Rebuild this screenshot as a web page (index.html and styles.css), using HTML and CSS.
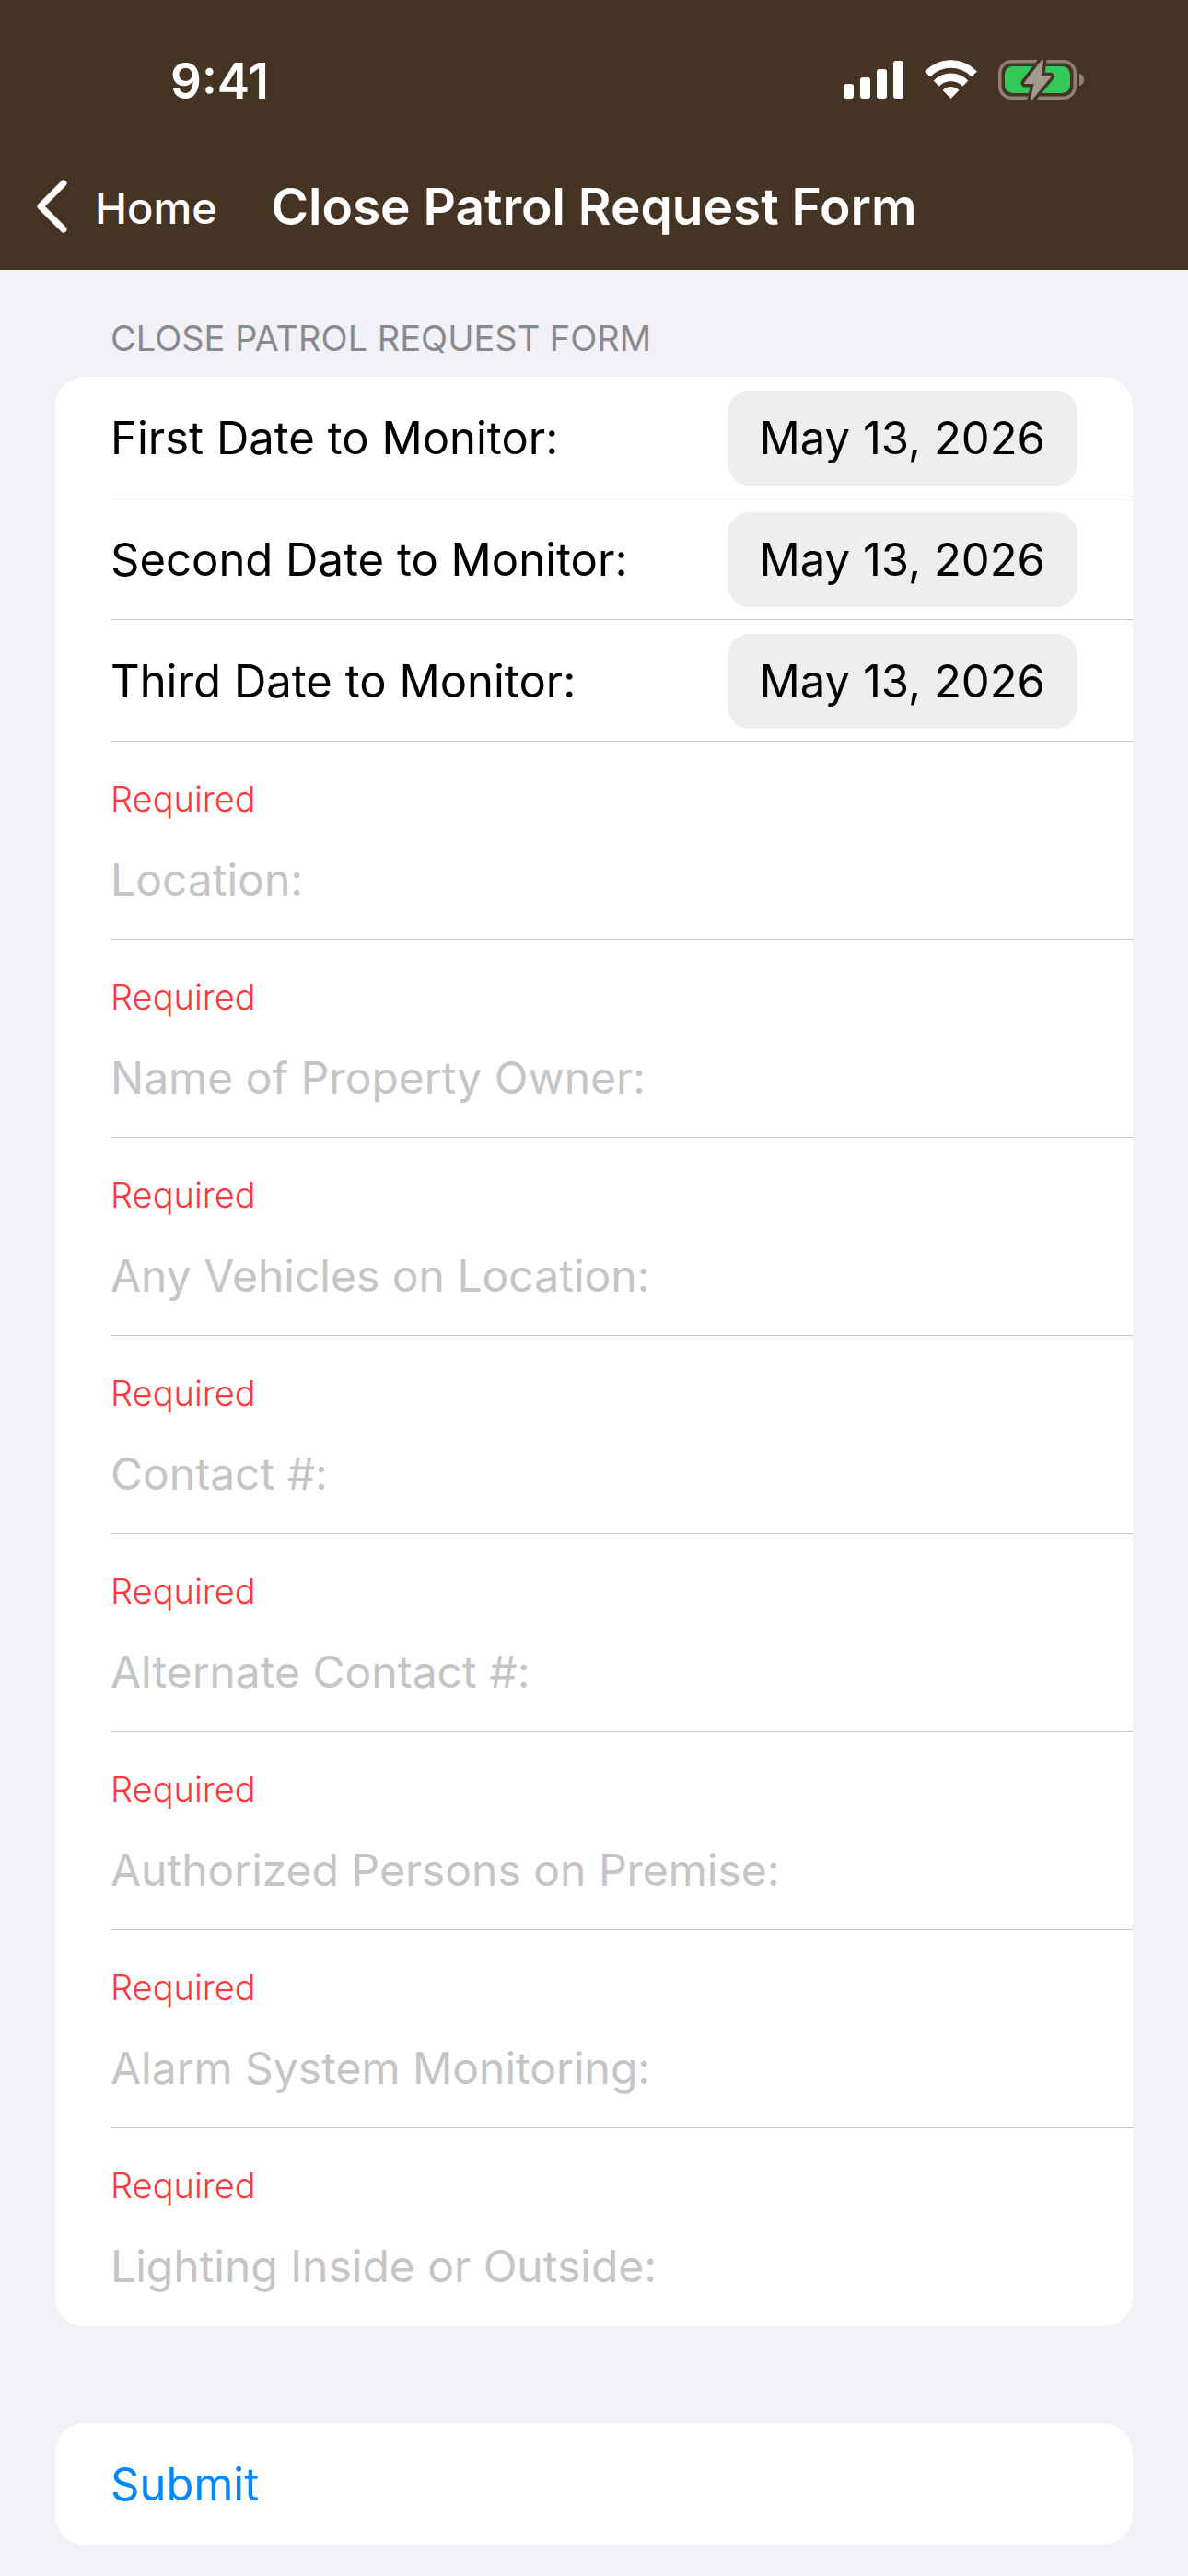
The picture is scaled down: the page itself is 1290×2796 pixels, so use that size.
FILE: index.html
```html
<!DOCTYPE html>
<html lang="en">

	<head>
		<meta charset="UTF-8">
		<meta name="viewport" content="width=device-width, initial-scale=1">
		<title>Close Patrol Request Form</title>
		<link rel="stylesheet" href="styles.css">
	</head>

	<body>
		<header class="header">
			<div class="status">
				<span class="time">9:41</span>
				<div class="status-icons">
					<!--signal-->
					<svg width="65" height="48" viewBox="0 0 65 48" fill="#fff" aria-hidden="true">
						<rect x="0" y="27" width="11" height="16" rx="3" />
						<rect x="18" y="20" width="11" height="23" rx="3" />
						<rect x="36" y="11" width="11" height="32" rx="3" />
						<rect x="54" y="2" width="11" height="41" rx="3" />
					</svg>
					<!--wifi-->
					<svg width="57" height="48" viewBox="0 0 57 48" fill="#fff" stroke="#fff" stroke-width="1" stroke-linejoin="round" aria-hidden="true">
						<path d="M.7 13.5A38.5 38.5 0 0 1 56.3 13.5L51 19A30.8 30.8 0 0 0 6 19Z" />
						<path d="M10.2 23.5A26 26 0 0 1 46.8 23.5L41.3 29.2A17.6 17.6 0 0 0 15.7 29.2Z" />
						<path d="M20.2 33.9A12 12 0 0 1 36.8 33.9L28.5 42.4Z" />
					</svg>
					<!--battery-->
					<svg width="93" height="48" viewBox="0 0 93 48" aria-hidden="true">
						<rect x="1.75" y="2.75" width="81.5" height="39.5" rx="12.5" fill="none" stroke="#8d8174" stroke-width="3.5" />
						<rect x="7" y="8" width="71" height="29" rx="8.5" fill="#34c759" />
						<path d="M88 15.5C91.4 16.8 93 19.3 93 22.4S91.4 28 88 29.3Z" fill="#8d8174" />
						<path d="M48 1.5L29 26H39.8L36 43.7L56.3 19.2H45.6Z" fill="#453323" stroke="#453323" stroke-width="9" stroke-linejoin="round" />
						<path d="M48 1.5L29 26H39.8L36 43.7L56.3 19.2H45.6Z" fill="#a2998f" stroke="#a2998f" stroke-width="2" stroke-linejoin="round" />
					</svg>
				</div>
			</div>
			<nav class="nav">
				<a class="back" href="#">
					<svg width="33" height="58" viewBox="0 0 33 58" fill="none" stroke="#fff" stroke-width="7" stroke-linecap="round" stroke-linejoin="round" aria-hidden="true">
						<path d="M29 4L4 29L29 54" />
					</svg>
					<span>Home</span>
				</a>
				<h1 class="title">Close Patrol Request Form</h1>
			</nav>
		</header>

		<main>
			<form class="form">
				<h2 class="caption">Close Patrol Request Form</h2>
				<div class="card">
					<div class="row date-row">
						<label for="date1">First Date to Monitor:</label>
						<button type="button" class="date" id="date1">May 13, 2026</button>
					</div>
					<div class="row date-row">
						<label for="date2">Second Date to Monitor:</label>
						<button type="button" class="date" id="date2">May 13, 2026</button>
					</div>
					<div class="row date-row">
						<label for="date3">Third Date to Monitor:</label>
						<button type="button" class="date" id="date3">May 13, 2026</button>
					</div>
					<div class="row field">
						<label for="location">Required</label>
						<input type="text" id="location" placeholder="Location:">
					</div>
					<div class="row field">
						<label for="owner">Required</label>
						<input type="text" id="owner" placeholder="Name of Property Owner:">
					</div>
					<div class="row field">
						<label for="vehicles">Required</label>
						<input type="text" id="vehicles" placeholder="Any Vehicles on Location:">
					</div>
					<div class="row field">
						<label for="contact">Required</label>
						<input type="tel" id="contact" placeholder="Contact #:">
					</div>
					<div class="row field">
						<label for="altContact">Required</label>
						<input type="tel" id="altContact" placeholder="Alternate Contact #:">
					</div>
					<div class="row field">
						<label for="persons">Required</label>
						<input type="text" id="persons" placeholder="Authorized Persons on Premise:">
					</div>
					<div class="row field">
						<label for="alarm">Required</label>
						<input type="text" id="alarm" placeholder="Alarm System Monitoring:">
					</div>
					<div class="row field">
						<label for="lighting">Required</label>
						<input type="text" id="lighting" placeholder="Lighting Inside or Outside:">
					</div>
				</div>
				<button type="submit" class="card submit">Submit</button>
			</form>
		</main>
	</body>

</html>
```

FILE: styles.css
```css
* {
	margin: 0;
	padding: 0;
	box-sizing: border-box;
}

body {
	min-height: 100vh;
	background: #f2f1f7;
	color: #000;
	font-family: Inter, "Liberation Sans", sans-serif;
	font-size: 49px;
	line-height: 60px;
}

button,
input {
	border: none;
	background: none;
	color: inherit;
	font: inherit;
}

svg {
	display: block;
}

/*top bar*/

.header {
	background: #453323;
	color: #fff;
}

.status {
	display: flex;
	justify-content: space-between;
	align-items: center;
	padding: 58px 113px 42px 185px;
}

.time {
	font-size: 53px;
	font-weight: 600;
}

.status-icons {
	display: flex;
	gap: 23px;
}

.nav {
	display: grid;
	grid-template-columns: 1fr auto 1fr;
	align-items: center;
	padding: 30px 40px 35px;
}

.back {
	display: flex;
	align-items: center;
	gap: 30px;
	color: #fff;
	font-size: 47px;
	font-weight: 500;
	line-height: 64px;
	text-decoration: none;
}

.back span {
	padding-top: 4px;
}

.title {
	font-size: 55px;
	font-weight: 600;
	line-height: 60px;
}

/*form*/

.form {
	padding: 51px 60px 34px;
}

.caption {
	margin: 0 60px 19px;
	color: #8a898e;
	font-size: 38px;
	font-weight: 400;
	line-height: 46px;
	text-transform: uppercase;
}

.card {
	overflow: hidden;
	border-radius: 32px;
	background: #fff;
}

.row {
	margin-left: 60px;
	padding-right: 60px;
	border-bottom: 1px solid #c6c6c8;
}

.row:last-child {
	border-bottom-color: transparent;
}

.date-row {
	display: flex;
	justify-content: space-between;
	align-items: center;
	padding-top: 15px;
	padding-bottom: 13px;
}

.date {
	padding: 22px 35px 21px;
	border-radius: 24px;
	background: #eee;
}

.field {
	display: flex;
	flex-direction: column;
	gap: 35px;
	padding-top: 39px;
	padding-bottom: 34px;
}

.field label {
	color: #ff383c;
	font-size: 38px;
	font-weight: 300;
	line-height: 46px;
}

.field input {
	width: 100%;
	height: 60px;
	outline: none;
	font-size: 48px;
}

.field input::placeholder {
	color: #c5c5c7;
	opacity: 1;
}

.submit {
	display: block;
	width: 100%;
	margin-top: 105px;
	padding: 37px 60px 35px;
	color: #08f;
	text-align: left;
}
```
